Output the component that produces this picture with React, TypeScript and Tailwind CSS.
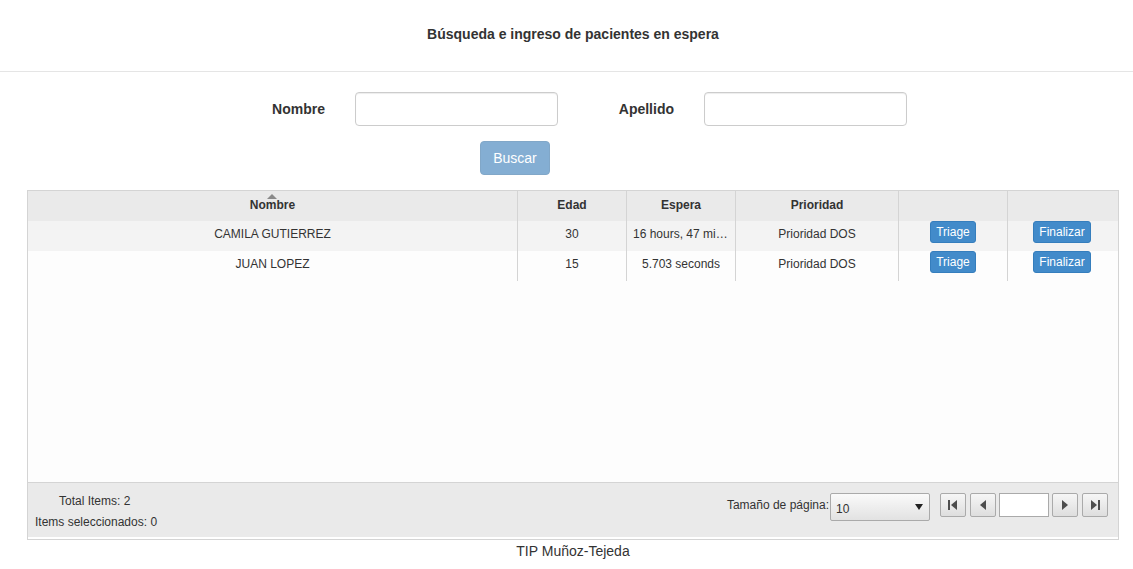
import { useState } from 'react';

interface Paciente {
  nombre: string;
  edad: number;
  espera: string;
  prioridad: string;
}

const PACIENTES: Paciente[] = [
  { nombre: 'CAMILA GUTIERREZ', edad: 30, espera: '16 hours, 47 minutes', prioridad: 'Prioridad DOS' },
  { nombre: 'JUAN LOPEZ', edad: 15, espera: '5.703 seconds', prioridad: 'Prioridad DOS' },
];

const FONT = "font-['Liberation_Sans','Helvetica_Neue',Arial,sans-serif]";

function PagerButton({ kind }: { kind: 'first' | 'prev' | 'next' | 'last' }) {
  return (
    <button className="flex h-[24px] w-[26px] items-center justify-center rounded-[2px] border border-[#aaaaaa] bg-gradient-to-b from-[#f6f6f6] to-[#dedede]">
      <svg width="12" height="10" viewBox="0 0 12 10" fill="#4d4d4d">
        {kind === 'first' && (
          <>
            <rect x="1" y="0" width="2" height="10" />
            <polygon points="4,5 10,0 10,10" />
          </>
        )}
        {kind === 'prev' && <polygon points="3,5 9,0 9,10" />}
        {kind === 'next' && <polygon points="3,0 3,10 9,5" />}
        {kind === 'last' && (
          <>
            <polygon points="2,0 2,10 8,5" />
            <rect x="9" y="0" width="2" height="10" />
          </>
        )}
      </svg>
    </button>
  );
}

export default function App() {
  const [nombre, setNombre] = useState('');
  const [apellido, setApellido] = useState('');

  return (
    <div className={`${FONT} min-h-[569px] bg-white text-[#333333]`}>
      {/* cabecera */}
      <div className="flex h-[72px] items-center justify-center border-b border-[#e5e5e5] pb-[2px] pl-[13px]">
        <h3 className="text-[14px] font-bold">Búsqueda e ingreso de pacientes en espera</h3>
      </div>

      {/* formulario */}
      <div className="mt-[20px] flex items-center">
        <label className="w-[325px] text-right text-[14px] font-bold">Nombre</label>
        <input
          value={nombre}
          onChange={(e) => setNombre(e.target.value)}
          className="ml-[30px] h-[34px] w-[203px] rounded-[4px] border border-[#cccccc] px-3 text-[14px] shadow-[inset_0_1px_1px_rgba(0,0,0,0.075)] outline-none"
        />
        <label className="w-[116px] text-right text-[14px] font-bold">Apellido</label>
        <input
          value={apellido}
          onChange={(e) => setApellido(e.target.value)}
          className="ml-[30px] h-[34px] w-[203px] rounded-[4px] border border-[#cccccc] px-3 text-[14px] shadow-[inset_0_1px_1px_rgba(0,0,0,0.075)] outline-none"
        />
      </div>
      <div className="mt-[15px] pl-[480px]">
        <button
          disabled
          className="h-[34px] w-[70px] rounded-[4px] border border-[#2e6da4] bg-[#337ab7] text-[14px] text-white opacity-60"
        >
          Buscar
        </button>
      </div>

      {/* grilla */}
      <div className="ml-[27px] mt-[15px] w-[1092px] border border-[#d4d4d4] bg-[#fdfdfd] text-[12px]">
        <div className="flex h-[30px] bg-[#eaeaea] font-bold">
          <div className="relative flex w-[490px] items-center justify-center border-r border-[#d4d4d4] pb-[3px]">
            <svg className="absolute left-[239px] top-[3px]" width="10" height="5" viewBox="0 0 10 5" fill="#8a8a8a">
              <polygon points="0,5 5,0 10,5" />
            </svg>
            <span className="pt-[1px]">Nombre</span>
          </div>
          <div className="flex w-[109px] items-center justify-center border-r border-[#d4d4d4] pb-[3px]">Edad</div>
          <div className="flex w-[109px] items-center justify-center border-r border-[#d4d4d4] pb-[3px]">Espera</div>
          <div className="flex w-[163px] items-center justify-center border-r border-[#d4d4d4] pb-[3px]">Prioridad</div>
          <div className="w-[109px] border-r border-[#d4d4d4]" />
          <div className="flex-1" />
        </div>

        <div className="h-[261px]">
          {PACIENTES.map((p, i) => (
            <div key={p.nombre} className={`flex h-[30px] ${i % 2 === 0 ? 'bg-[#f3f3f3]' : 'bg-[#fdfdfd]'}`}>
              <div className="flex w-[490px] items-center justify-center border-r border-[#d4d4d4] pb-[4px]">{p.nombre}</div>
              <div className="flex w-[109px] items-center justify-center border-r border-[#d4d4d4] pb-[4px]">{p.edad}</div>
              <div className="flex w-[109px] items-center justify-center border-r border-[#d4d4d4] px-[6px] pb-[4px]">
                <span className="truncate">{p.espera}</span>
              </div>
              <div className="flex w-[163px] items-center justify-center border-r border-[#d4d4d4] pb-[4px]">{p.prioridad}</div>
              <div className="flex w-[109px] items-start justify-center border-r border-[#d4d4d4]">
                <button className="h-[22px] rounded-[3px] border border-[#357ebd] bg-[#428bca] px-[5px] text-[12px] leading-[18px] text-white">
                  Triage
                </button>
              </div>
              <div className="flex flex-1 items-start justify-center pr-[2px]">
                <button className="h-[22px] rounded-[3px] border border-[#357ebd] bg-[#428bca] px-[5px] text-[12px] leading-[18px] text-white">
                  Finalizar
                </button>
              </div>
            </div>
          ))}
        </div>

        <div className="flex h-[55px] border-t border-[#d4d4d4] bg-[#eaeaea]">
          <div className="flex flex-col pl-[7px] pt-[11px]">
            <span className="pl-[24px] leading-[14px]">Total Items: 2</span>
            <span className="mt-[7px] leading-[14px]">Items seleccionados: 0</span>
          </div>
          <div className="ml-auto flex items-start pr-[10px] pt-[10px]">
            <span className="mt-[3px]">Tamaño de página:</span>
            <div className="ml-[1px] flex h-[28px] w-[100px] items-center justify-between rounded-[2px] border border-[#aaaaaa] bg-gradient-to-b from-[#fafafa] to-[#e2e2e2] pl-[5px] pr-[6px]">
              <span className="pt-[3px]">10</span>
              <svg width="8" height="6" viewBox="0 0 8 6" fill="#222">
                <polygon points="0,0 8,0 4,6" />
              </svg>
            </div>
            <div className="ml-[10px] flex gap-[4px]">
              <PagerButton kind="first" />
              <PagerButton kind="prev" />
              <input className="-mx-[1px] h-[24px] w-[50px] border border-[#aaaaaa] bg-white outline-none" />
              <PagerButton kind="next" />
              <PagerButton kind="last" />
            </div>
          </div>
        </div>
        <div className="h-[2px] bg-white" />
      </div>

      <p className="mt-[1px] w-[1146px] text-center text-[14px]">TIP Muñoz-Tejeda</p>
    </div>
  );
}
